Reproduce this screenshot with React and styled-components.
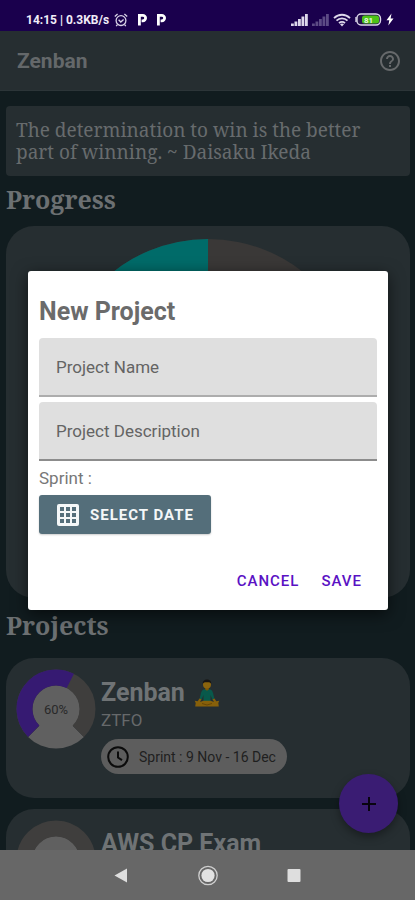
import React, { useState } from "react";
import styled, { createGlobalStyle } from "styled-components";

const projects = [
    { name: "Zenban", emoji: true, description: "ZTFO", sprint: "9 Nov - 16 Dec", progress: 60 },
    { name: "AWS CP Exam", progress: 0 },
];

export default () => {
    const [name, setName] = useState("");
    const [description, setDescription] = useState("");

    return (
        <Screen>
            <GlobalStyle />
            <StatusBar />
            <Main>
                <AppBar>
                    <AppTitle>Zenban</AppTitle>
                    <IconButton aria-label="Help"><HelpIcon /></IconButton>
                </AppBar>
                <Content>
                    <Quote>The determination to win is the better part of winning. ~ Daisaku Ikeda</Quote>
                    <Heading>Progress</Heading>
                    <ProgressCard><Pie /></ProgressCard>
                    <Heading $spaced>Projects</Heading>
                    <List>
                        {projects.map((elem) => <Project key={elem.name} {...elem} />)}
                    </List>
                </Content>
                <Fab aria-label="Add project">
                    <svg width="16" height="16" viewBox="0 0 16 16"><path d="M8 1v14M1 8h14" stroke="#08040f" strokeWidth="2" /></svg>
                </Fab>
                <Overlay>
                    <Dialog role="dialog" aria-labelledby="dialog-title">
                        <DialogTitle id="dialog-title">New Project</DialogTitle>
                        <Field $line="#adadad">
                            <span>Project Name</span>
                            <input value={name} onChange={(e) => setName(e.target.value)} />
                        </Field>
                        <Field $line="#8c8c8c">
                            <span>Project Description</span>
                            <input value={description} onChange={(e) => setDescription(e.target.value)} />
                        </Field>
                        <SprintLabel>Sprint :</SprintLabel>
                        <DateButton><GridIcon />SELECT DATE</DateButton>
                        <Actions>
                            <TextButton>CANCEL</TextButton>
                            <TextButton>SAVE</TextButton>
                        </Actions>
                    </Dialog>
                </Overlay>
            </Main>
            <NavBar>
                <NavButton aria-label="Back">
                    <svg width="22" height="22" viewBox="0 0 22 22"><path d="M3.500 11.500 16 4.500v14z" fill="#dedede" /></svg>
                </NavButton>
                <NavButton aria-label="Home">
                    <svg width="22" height="22" viewBox="0 0 22 22">
                        <circle cx="11" cy="11.5" r="9.2" fill="none" stroke="#cfcfcf" strokeWidth="1.3" />
                        <circle cx="11" cy="11.5" r="6.6" fill="#e2e2e2" />
                    </svg>
                </NavButton>
                <NavButton aria-label="Recent apps">
                    <svg width="22" height="22" viewBox="0 0 22 22"><rect x="4.5" y="5" width="13" height="13" rx="1" fill="#dedede" /></svg>
                </NavButton>
            </NavBar>
        </Screen>
    );
}

function Project(props) {
    return (
        <Card>
            <Ring value={props.progress} />
            <Info>
                <ProjectName>{props.name}{props.emoji ? <Meditating /> : null}</ProjectName>
                {props.description ? <Description>{props.description}</Description> : null}
                {props.sprint ? <Chip><ClockIcon />Sprint : {props.sprint}</Chip> : null}
            </Info>
        </Card>
    );
}

// point on a circle, degrees clockwise from the top
const point = (c, r, deg) => {
    const a = (deg * Math.PI) / 180;
    return `${c + r * Math.sin(a)} ${c - r * Math.cos(a)}`;
}

const arc = (from, to) =>
    `M${point(40, 31.5, from)}A31.5 31.5 0 ${to - from > 180 ? 1 : 0} 1 ${point(40, 31.5, to)}`;

function Ring({ value }) {
    return (
        <RingSvg viewBox="0 0 80 80">
            <circle cx="40" cy="40" r="24" fill="#606060" />
            <path d={`M40 40L${point(40, 39.5, 135)}A39.5 39.5 0 0 1 ${point(40, 39.5, 225)}z`} fill="#606060" />
            <path d={arc(225, 495)} fill="none" stroke="#3f3e3d" strokeWidth="16" />
            {value ? <path d={arc(225, 225 + value * 2.7)} fill="none" stroke="#361a72" strokeWidth="16" /> : null}
            {value ? <text x="40" y="45" textAnchor="middle" fontSize="13" fill="#292929">{value}%</text> : null}
        </RingSvg>
    );
}

function Pie() {
    return (
        <svg width="308" height="308" viewBox="0 0 308 308">
            <circle cx="154" cy="154" r="154" fill="#3a3837" />
            <path d="M154 154V0A154 154 0 0 0 0 154z" fill="#006b69" />
        </svg>
    );
}

function StatusBar() {
    return (
        <Status>
            <StatusGroup $gap="5px">
                <span>14:15 | 0.3KB/s</span>
                <svg width="14" height="14" viewBox="0 0 14 14" fill="none" stroke="#d8d2e6" strokeWidth="1.3">
                    <circle cx="7" cy="7.6" r="4.9" />
                    <path d="M.8 3.6 3.6 1M13.2 3.6 10.4 1M4.6 6.8 6.8 9l2.8-2.6M3.4 11.6l-1.2 1.6M10.6 11.6l1.2 1.6" />
                </svg>
                <ParkingIcon />
                <ParkingIcon />
            </StatusGroup>
            <StatusGroup $gap="4px">
                <Signal color="#ddd7ea" />
                <Signal color="#5d4b85" />
                <svg width="18" height="14" viewBox="0 0 18 14" fill="none" stroke="#ddd7ea" strokeWidth="1.8">
                    <path d="M1 5.2C5.6.6 12.4.6 17 5.2M3.5 7.7c3-3 8-3 11 0M6 10.2c1.7-1.6 4.3-1.6 6 0" />
                    <path d="M9 13.5 7 11.2c1.2-1 2.8-1 4 0z" fill="#ddd7ea" stroke="none" />
                </svg>
                <svg width="27" height="13" viewBox="0 0 27 13">
                    <path d="M6 1h15a4.500 4.500 0 0 1 4.500 4.500v2A4.500 4.500 0 0 1 21 12H6a4 4 0 0 1-4-4V5a4 4 0 0 1 4-4z" fill="#26124e" stroke="#ddd7ea" strokeWidth="1.4" />
                    <path d="M1 4v5" stroke="#ddd7ea" strokeWidth="1.4" />
                    <rect x="7" y="2.5" width="17" height="8" rx="2.5" fill="#4cc316" />
                    <text x="13.5" y="9.5" textAnchor="middle" fontSize="8" fontWeight="700" fill="#eaf8e2">81</text>
                </svg>
                <svg width="8" height="13" viewBox="0 0 8 13"><path d="M5.5.5.5 7.3h2.8L2.3 12.500l5.200-7H4.600z" fill="#fff" /></svg>
            </StatusGroup>
        </Status>
    );
}

function ParkingIcon() {
    return (
        <ParkingSvg width="10" height="13" viewBox="0 0 10 13">
            <path d="M2.400 12.500V2.300h3.400a2.600 2.600 0 0 1 0 5.600H4.600" fill="none" stroke="#fff" strokeWidth="2.800" />
        </ParkingSvg>
    );
}

function Signal({ color }) {
    return (
        <svg width="17" height="13" viewBox="0 0 17 13" fill={color}>
            <rect x="0" y="10.5" width="2.800" height="2.500" />
            <rect x="3.5" y="8.500" width="2.800" height="4.500" />
            <rect x="7" y="6" width="2.800" height="7" />
            <rect x="10.5" y="3.500" width="2.800" height="9.500" />
            <rect x="14" y="1" width="2.800" height="12" />
        </svg>
    );
}

function HelpIcon() {
    return (
        <svg width="24" height="24" viewBox="0 0 24 24" fill="#66696b">
            <path d="M11 18h2v-2h-2v2zm1-16C6.480 2 2 6.480 2 12s4.480 10 10 10 10-4.480 10-10S17.520 2 12 2zm0 18c-4.410 0-8-3.590-8-8s3.590-8 8-8 8 3.590 8 8-3.590 8-8 8zm0-14c-2.210 0-4 1.790-4 4h2c0-1.100.9-2 2-2s2 .9 2 2c0 2-3 1.750-3 5h2c0-2.250 3-2.500 3-5 0-2.210-1.790-4-4-4z" />
        </svg>
    );
}

function GridIcon() {
    return (
        <svg width="22" height="22" viewBox="0 0 22 22">
            <rect width="22" height="22" rx="2" fill="#f4f7f8" />
            {[3, 9, 15].map((y) => [3, 9, 15].map((x) => <rect key={`${x}-${y}`} x={x} y={y} width="4" height="4" fill="#546e7a" />))}
        </svg>
    );
}

function ClockIcon() {
    return (
        <svg width="22" height="22" viewBox="0 0 22 22" fill="none" stroke="#0b0b0b" strokeWidth="2">
            <circle cx="11" cy="11" r="9.8" />
            <path d="M11 5.500v6l4 2.600" />
        </svg>
    );
}

function Meditating() {
    return (
        <svg width="26" height="28" viewBox="0 0 26 28">
            <path d="M9.500 10.500Q13 9.500 16.500 10.500 18.500 11 19 14l1.500 6-2 .8L16.500 16v6.500h-7V16l-2 4.800-2-.8L7 14q.5-3 2.500-3.500z" fill="#08594b" />
            <path d="M5.500 19.500l2 .8L6 23l3.500-1.200h7L20 23l-1.500-2.700 2-.8 1.800 2.700 3-.5-1 2.300.5 3.500H1.200l.5-3.500-1-2.300 3 .5z" fill="#87600a" />
            <path d="M8 24.500 13 26l5-1.500" fill="none" stroke="#684604" strokeWidth="1" />
            <path d="M11.200 8h3.600v2.400L13 11.800l-1.800-1.400z" fill="#7c5405" />
            <circle cx="13" cy="5.500" r="4" fill="#8b640d" />
            <path d="M8.800 5C8.500 2 10.500.5 13 .5S17.500 2 17.200 5c-.7-1.600-1.500-1.800-4.200-1.800S9.500 3.400 8.800 5z" fill="#171413" />
        </svg>
    );
}

const GlobalStyle = createGlobalStyle`
  * { box-sizing: border-box; }
  body {
    margin: 0;
    background: #111c1f;
    font-family: Roboto, "Liberation Sans", sans-serif;
  }
  button {
    border: 0;
    padding: 0;
    background: none;
    font-family: inherit;
    cursor: pointer;
  }
  svg { display: block; flex-shrink: 0; }
`;

const Screen = styled.div`
  display: flex;
  flex-direction: column;
  height: 100vh;
  overflow: hidden;
`;

const Status = styled.header`
  display: flex;
  align-items: center;
  justify-content: space-between;
  flex-shrink: 0;
  height: 31px;
  padding: 8px 21px 0 26px;
  background: #1a004d;
  color: #f1edf8;
  font-size: 12px;
  font-weight: 700;
`;

const StatusGroup = styled.div`
  display: flex;
  align-items: center;
  gap: ${(props) => props.$gap};
`;

const ParkingSvg = styled.svg`
  margin-left: 4px;
`;

const Main = styled.main`
  position: relative;
  display: flex;
  flex-direction: column;
  flex: 1;
  min-height: 0;
`;

const AppBar = styled.div`
  display: flex;
  align-items: center;
  justify-content: space-between;
  flex-shrink: 0;
  height: 60px;
  padding: 0 13px 0 17px;
  background: #262e31;
  border-bottom: 1px solid #2c3538;
`;

const AppTitle = styled.h1`
  margin: 0;
  color: #64686a;
  font-size: 21px;
  font-weight: 700;
`;

const IconButton = styled.button`
  width: 24px;
  height: 24px;
`;

const Content = styled.div`
  flex: 1;
  min-height: 0;
  overflow: hidden;
  padding: 15px 5px 0 6px;
`;

const Quote = styled.p`
  margin: 0;
  padding: 13px 10px;
  border-radius: 4px;
  background: #262e31;
  color: #676b6d;
  font-family: "Noto Serif", "DejaVu Serif Condensed", "DejaVu Serif", serif;
  font-size: 19px;
  line-height: 22px;
`;

const Heading = styled.h2`
  margin: 0;
  padding: ${(props) => (props.$spaced ? "10px 0 6px" : "6px 0 10px")};
  color: #6c7072;
  font-family: "Noto Serif", "DejaVu Serif Condensed", "DejaVu Serif", serif;
  font-size: 25px;
  font-weight: 700;
  line-height: 34px;
`;

const ProgressCard = styled.section`
  display: flex;
  justify-content: center;
  height: 372px;
  padding-top: 13px;
  border-radius: 28px;
  background: #262e31;
`;

const List = styled.div`
  display: flex;
  flex-direction: column;
  gap: 11px;
  padding-top: 10px;
`;

const Card = styled.article`
  display: flex;
  gap: 5px;
  height: 140px;
  padding: 11px 10px;
  border-radius: 28px;
  background: #262e31;
`;

const RingSvg = styled.svg`
  width: 80px;
  height: 80px;
`;

const Info = styled.div`
  display: flex;
  flex-direction: column;
  align-items: flex-start;
  padding-top: 8px;
`;

const ProjectName = styled.h3`
  display: flex;
  align-items: center;
  gap: 9px;
  margin: 0;
  color: #6f7375;
  font-size: 25px;
  font-weight: 700;
  line-height: 32px;
`;

const Description = styled.p`
  margin: 0 0 8px;
  color: #66696b;
  font-size: 17px;
  line-height: 22px;
`;

const Chip = styled.div`
  display: flex;
  align-items: center;
  gap: 10px;
  height: 35px;
  padding: 0 11px 0 6px;
  border-radius: 18px;
  background: #5d5d5d;
  color: #1f1f1f;
  font-size: 14px;
`;

const Fab = styled.button`
  position: absolute;
  right: 17px;
  bottom: 17px;
  display: flex;
  align-items: center;
  justify-content: center;
  width: 59px;
  height: 59px;
  border-radius: 50%;
  background: #3a1c73;
  box-shadow: 0 4px 8px rgba(0, 0, 0, 0.35);
`;

const Overlay = styled.div`
  position: absolute;
  inset: 0;
  display: flex;
  align-items: center;
  padding: 0 27px 0 28px;
`;

const Dialog = styled.form`
  display: flex;
  flex-direction: column;
  align-items: flex-start;
  width: 100%;
  padding: 20px 11px 11px;
  border-radius: 3px;
  background: #fff;
  box-shadow: 0 4px 16px rgba(0, 0, 0, 0.6);
`;

const DialogTitle = styled.h2`
  margin: 0;
  padding: 5px 0 10px;
  color: #6b6b6b;
  font-size: 25px;
  font-weight: 700;
  line-height: 32px;
`;

const Field = styled.label`
  display: flex;
  align-items: center;
  width: 100%;
  height: 59px;
  margin-bottom: 5px;
  padding: 0 17px;
  border-bottom: 2px solid ${(props) => props.$line};
  border-radius: 4px 4px 0 0;
  background: #dfdfdf;
  color: #646464;
  font-size: 17px;

  span { flex-shrink: 0; }

  input {
    flex: 1;
    min-width: 0;
    border: 0;
    outline: 0;
    background: transparent;
    font: inherit;
  }
`;

const SprintLabel = styled.p`
  margin: 0;
  padding: 1px 0 6px;
  color: #777;
  font-size: 17px;
  line-height: 22px;
`;

const DateButton = styled.button.attrs({ type: "button" })`
  display: flex;
  align-items: center;
  gap: 11px;
  height: 39px;
  padding: 0 17px 0 18px;
  border-radius: 3px;
  background: #546e7a;
  color: #f4f7f8;
  font-size: 15px;
  font-weight: 700;
  letter-spacing: 1px;
  box-shadow: 0 1px 2px rgba(0, 0, 0, 0.2);
`;

const Actions = styled.div`
  display: flex;
  align-self: flex-end;
  gap: 22px;
  padding: 28px 15px 0 0;
`;

const TextButton = styled.button.attrs({ type: "button" })`
  height: 37px;
  color: #5a12c4;
  font-size: 15px;
  font-weight: 500;
  letter-spacing: 1px;
`;

const NavBar = styled.nav`
  display: flex;
  align-items: center;
  justify-content: center;
  gap: 64px;
  flex-shrink: 0;
  height: 50px;
  background: #676767;
`;

const NavButton = styled.button`
  width: 22px;
  height: 22px;
`;
